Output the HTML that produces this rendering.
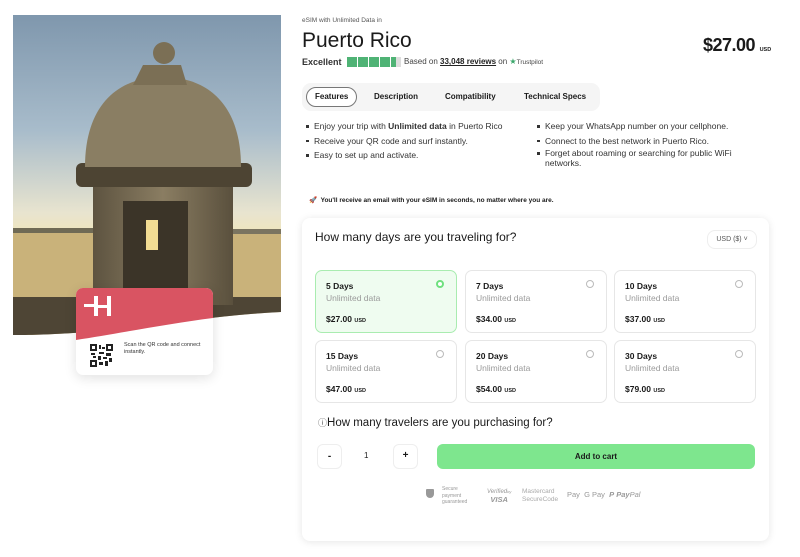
<!DOCTYPE html>
<html><head><meta charset="utf-8">
<style>
*{box-sizing:border-box;margin:0;padding:0}
body{width:800px;height:557px;background:#fff;font-family:"Liberation Sans",sans-serif;color:#1a1a1a;position:relative;overflow:hidden}
.abs{position:absolute}
.opt{position:absolute;width:142px;height:63px;border:1px solid #e6e6e6;border-radius:7px;background:#fff}
.opt.sel{background:#effcf0;border-color:#a9ecb0}
.opt b{position:absolute;left:10px;top:10px;font-size:8.5px}
.opt .u{position:absolute;left:10px;top:22px;font-size:8.5px;color:#9a9a9a}
.opt .p{position:absolute;left:10px;top:43px;font-size:8.5px;font-weight:bold}
.opt .p small{font-size:5.5px}
.opt .r{position:absolute;right:12px;top:9px;width:8px;height:8px;border:1px solid #bbb;border-radius:50%}
.opt.sel .r{border:2px solid #6fe07f;background:#fff}
li{list-style:none;font-size:8.5px;color:#333;margin-bottom:4.5px;padding-left:8px;position:relative}
li:before{content:"";position:absolute;left:0;top:4px;width:2.5px;height:2.5px;background:#333}
.tab{position:absolute;top:92px;font-size:8px;font-weight:bold}
</style></head><body>

<svg class="abs" style="left:13px;top:15px" width="270" height="330" viewBox="0 0 270 330">
<defs>
<linearGradient id="sky" x1="0" y1="0" x2="0" y2="1">
<stop offset="0" stop-color="#7f97ad"/><stop offset="0.35" stop-color="#a8bccb"/><stop offset="0.6" stop-color="#e8e4cf"/><stop offset="0.7" stop-color="#f3e6b2"/><stop offset="1" stop-color="#b99a55"/>
</linearGradient>
<linearGradient id="stone" x1="0" y1="0" x2="1" y2="0">
<stop offset="0" stop-color="#5d5340"/><stop offset="0.5" stop-color="#8a7d62"/><stop offset="1" stop-color="#5a503d"/>
</linearGradient>
<clipPath id="c"><path d="M0 0H268V297C200 300 120 315 60 318C30 320 10 320 0 320Z"/></clipPath>
</defs>
<g clip-path="url(#c)">
<rect width="270" height="330" fill="url(#sky)"/>
<rect y="215" width="270" height="75" fill="#c9b27a"/>
<rect y="213" width="80" height="5" fill="#6f6a55"/>
<rect x="210" y="214" width="60" height="5" fill="#7a7460"/>
<rect y="282" width="270" height="50" fill="#4e4535"/>
<rect x="80" y="170" width="140" height="120" fill="url(#stone)"/>
<rect x="110" y="186" width="65" height="100" fill="#3b3428"/>
<rect x="133" y="205" width="12" height="30" fill="#f2dc93"/>
<rect x="63" y="148" width="176" height="24" rx="6" fill="#4d4433"/>
<path d="M72 152C72 90 105 62 150 62C195 62 228 90 228 152Z" fill="#8a7e63"/>
<path d="M120 70L130 50H168L174 70Z" fill="#7b6f55"/>
<circle cx="151" cy="38" r="11" fill="#7b6f55"/>
</g>
</svg>

<div class="abs" style="left:76px;top:288px;width:137px;height:87px;border-radius:7px;background:#fff;box-shadow:0 3px 12px rgba(0,0,0,.12);overflow:hidden">
<svg class="abs" style="left:0;top:0" width="137" height="55"><path d="M0 0H137V30C90 36 40 46 0 52Z" fill="#d95462"/></svg>
<div class="abs" style="left:8px;top:16px;width:12px;height:3px;background:#fff"></div>
<div class="abs" style="left:18px;top:8px;width:4px;height:20px;background:#fff"></div>
<div class="abs" style="left:31px;top:8px;width:4px;height:20px;background:#fff"></div>
<div class="abs" style="left:18px;top:17px;width:17px;height:3px;background:#fff"></div>
<svg class="abs" style="left:14px;top:56px" width="23" height="23" viewBox="0 0 23 23">
<rect width="23" height="23" fill="#fff"/>
<g fill="#222"><rect x="0" y="0" width="7" height="7"/><rect x="16" y="0" width="7" height="7"/><rect x="0" y="16" width="7" height="7"/>
<rect x="9" y="1" width="2" height="4"/><rect x="12" y="3" width="3" height="2"/><rect x="9" y="8" width="5" height="2"/><rect x="1" y="9" width="4" height="2"/><rect x="16" y="9" width="5" height="3"/><rect x="8" y="12" width="3" height="4"/><rect x="13" y="13" width="4" height="2"/><rect x="19" y="14" width="3" height="4"/><rect x="9" y="18" width="4" height="3"/><rect x="15" y="17" width="3" height="5"/><rect x="3" y="12" width="3" height="2"/></g>
<g fill="#fff"><rect x="2" y="2" width="3" height="3"/><rect x="18" y="2" width="3" height="3"/><rect x="2" y="18" width="3" height="3"/></g>
</svg>
<div class="abs" style="left:48px;top:54px;font-size:5.5px;color:#333;line-height:7px">Scan the QR code and connect<br>instantly.</div>
</div>

<div class="abs" style="left:302px;top:17px;font-size:6.5px;color:#555">eSIM with Unlimited Data in</div>
<div class="abs" style="left:302px;top:29px;font-size:21px">Puerto Rico</div>
<div class="abs" style="left:703px;top:35px;font-size:18px;font-weight:bold;letter-spacing:-.5px">$27.00 <span style="font-size:5.5px;letter-spacing:0">USD</span></div>
<div class="abs" style="left:302px;top:57px;font-size:9px;font-weight:bold;color:#333">Excellent</div>
<div class="abs" style="left:347px;top:57px;display:flex;gap:1px">
<span style="width:10px;height:10px;background:#4fb375"></span><span style="width:10px;height:10px;background:#4fb375"></span><span style="width:10px;height:10px;background:#4fb375"></span><span style="width:10px;height:10px;background:#4fb375"></span><span style="width:10px;height:10px;background:linear-gradient(90deg,#4fb375 50%,#ddd 50%)"></span>
</div>
<div class="abs" style="left:404px;top:57px;font-size:8px;color:#444">Based on <u style="font-weight:bold;color:#222">33,048 reviews</u> on <span style="color:#3aa66a">★</span><span style="font-size:6.5px">Trustpilot</span></div>

<div class="abs" style="left:302px;top:83px;width:298px;height:28px;border-radius:9px;background:#f5f5f5"></div>
<div class="abs" style="left:306px;top:87px;width:51px;height:20px;border-radius:10px;background:#fff;border:1px solid #777"></div>
<div class="tab" style="left:315px">Features</div>
<div class="tab" style="left:374px">Description</div>
<div class="tab" style="left:445px">Compatibility</div>
<div class="tab" style="left:524px">Technical Specs</div>

<ul class="abs" style="left:306px;top:121px">
<li>Enjoy your trip with <b>Unlimited data</b> in Puerto Rico</li>
<li>Receive your QR code and surf instantly.</li>
<li>Easy to set up and activate.</li>
</ul>
<ul class="abs" style="left:537px;top:121px;width:200px">
<li>Keep your WhatsApp number on your cellphone.</li>
<li>Connect to the best network in Puerto Rico.</li>
<li style="line-height:10px;margin-top:-2px">Forget about roaming or searching for public WiFi networks.</li>
</ul>
<div class="abs" style="left:309px;top:196px;font-size:6.5px;font-weight:bold">🚀&nbsp; You'll receive an email with your eSIM in seconds, no matter where you are.</div>

<div class="abs" style="left:302px;top:218px;width:467px;height:323px;border-radius:8px;background:#fff;box-shadow:0 1px 8px rgba(0,0,0,.1)"></div>
<div class="abs" style="left:315px;top:230px;font-size:12px">How many days are you traveling for?</div>
<div class="abs" style="left:707px;top:230px;width:50px;height:19px;border:1px solid #eee;border-radius:8px;font-size:7px;color:#555;text-align:center;line-height:17px">USD ($) ˅</div>

<div class="opt sel" style="left:315px;top:270px"><b>5 Days</b><div class="u">Unlimited data</div><div class="p">$27.00 <small>USD</small></div><div class="r"></div></div>
<div class="opt" style="left:465px;top:270px"><b>7 Days</b><div class="u">Unlimited data</div><div class="p">$34.00 <small>USD</small></div><div class="r"></div></div>
<div class="opt" style="left:614px;top:270px"><b>10 Days</b><div class="u">Unlimited data</div><div class="p">$37.00 <small>USD</small></div><div class="r"></div></div>
<div class="opt" style="left:315px;top:340px"><b>15 Days</b><div class="u">Unlimited data</div><div class="p">$47.00 <small>USD</small></div><div class="r"></div></div>
<div class="opt" style="left:465px;top:340px"><b>20 Days</b><div class="u">Unlimited data</div><div class="p">$54.00 <small>USD</small></div><div class="r"></div></div>
<div class="opt" style="left:614px;top:340px"><b>30 Days</b><div class="u">Unlimited data</div><div class="p">$79.00 <small>USD</small></div><div class="r"></div></div>

<div class="abs" style="left:318px;top:416px;font-size:11.5px"><span style="font-size:9px;color:#555">ⓘ</span>How many travelers are you purchasing for?</div>
<div class="abs" style="left:317px;top:444px;width:25px;height:25px;border:1px solid #eee;border-radius:6px;text-align:center;line-height:23px;font-size:10px;font-weight:bold">-</div>
<div class="abs" style="left:364px;top:451px;font-size:8px">1</div>
<div class="abs" style="left:393px;top:444px;width:25px;height:25px;border:1px solid #eee;border-radius:6px;text-align:center;line-height:22px;font-size:10px;font-weight:bold">+</div>
<div class="abs" style="left:437px;top:444px;width:318px;height:25px;border-radius:6px;background:#7ee68e;text-align:center;line-height:25px;font-size:8px;font-weight:bold">Add to cart</div>

<div class="abs" style="left:426px;top:489px;width:8px;height:9px;background:#999;border-radius:1px 1px 4px 4px"></div>
<div class="abs" style="left:442px;top:486px;font-size:5px;color:#999;line-height:6.5px">Secure<br>payment<br>guaranteed</div>
<div class="abs" style="left:487px;top:488px;font-size:6px;color:#999;font-style:italic;line-height:7px;text-align:center">Verified<span style="font-size:4px">by</span><br><b style="font-size:7.5px">VISA</b></div>
<div class="abs" style="left:522px;top:488px;font-size:6.5px;color:#aaa;line-height:7.5px">Mastercard<br>SecureCode</div>
<div class="abs" style="left:567px;top:490px;font-size:7.5px;color:#999"> Pay&nbsp; G Pay&nbsp; <b style="font-style:italic">P</b> <i><b>Pay</b>Pal</i></div>
</body></html>
